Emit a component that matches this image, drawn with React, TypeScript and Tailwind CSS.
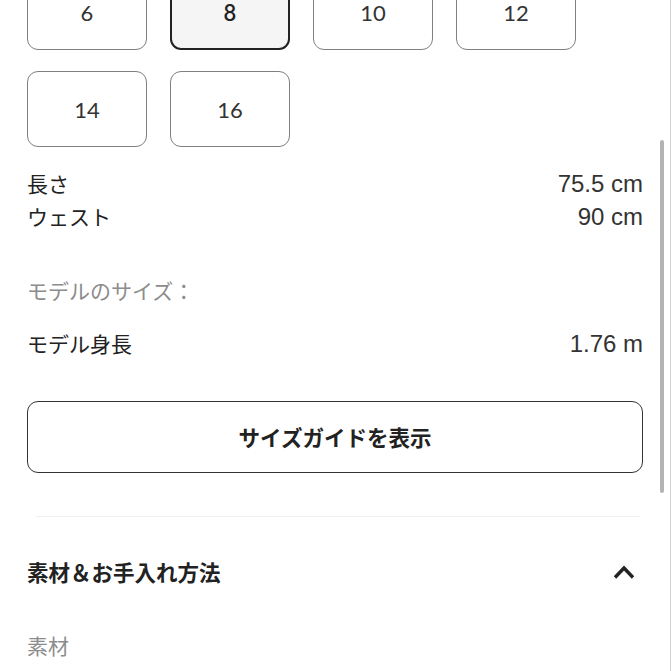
const sizes = ['6', '8', '10', '12', '14', '16']

const jp = { fontFamily: '"Noto Sans CJK JP", "Noto Sans", sans-serif' }
const num = { fontFamily: '"Liberation Sans", Arial, sans-serif' }

export default function App() {
  return (
    <div className="relative w-[671px] h-[671px] overflow-hidden bg-white border-r border-[#d4d4d4] text-[#222]" style={jp}>
      <div className="pl-[27px] pr-[27px] mt-[-26px]">
        <div className="grid grid-cols-[120px_120px_120px_120px] gap-x-[23px] gap-y-[21px]">
          {sizes.map((s) => (
            <div
              key={s}
              className={
                s === '8'
                  ? 'h-[76px] rounded-[11px] border-[2.5px] border-[#222] bg-[#f5f5f5] flex items-center justify-center text-[22px] font-semibold'
                  : 'h-[76px] rounded-[11px] border border-[#808080] bg-white flex items-center justify-center text-[22px] text-[#333]'
              }
              style={{ fontFamily: 'Lato, "Noto Sans", sans-serif' }}
            >
              {s}
            </div>
          ))}
        </div>

        <div className="mt-[20px] text-[21px] leading-[33px]">
          <div className="flex justify-between items-center">
            <span>長さ</span>
            <span className="text-[24px] text-[#333]" style={num}>75.5 cm</span>
          </div>
          <div className="flex justify-between items-center">
            <span>ウェスト</span>
            <span className="text-[24px] text-[#333]" style={num}>90 cm</span>
          </div>
        </div>

        <div className="mt-[41px] text-[21px] leading-[33px] text-[#8c8c8c]">モデルのサイズ：</div>

        <div className="mt-[20px] flex justify-between items-center text-[21px] leading-[33px]">
          <span>モデル身長</span>
          <span className="text-[24px] text-[#333]" style={num}>1.76 m</span>
        </div>

        <button className="mt-[41px] w-full h-[72px] rounded-[11px] border-[1.5px] border-[#333] bg-white flex items-center justify-center text-[21.5px] font-bold text-[#222]">
          サイズガイドを表示
        </button>

        <div className="mt-[43px] h-px bg-[#efefef] ml-[9px] mr-[3px]" />

        <div className="mt-[38px] flex items-center justify-between">
          <span className="text-[21.5px] font-bold leading-[33px]">素材＆お手入れ方法</span>
          <svg width="22" height="14" viewBox="0 0 22 14" className="mr-[8px]">
            <polyline points="2,12.5 11,3 20,12.5" fill="none" stroke="#222" strokeWidth="3.4" />
          </svg>
        </div>

        <div className="mt-[41px] text-[21px] leading-[33px] text-[#8c8c8c]">素材</div>
      </div>

      <div className="absolute left-[660px] top-[140px] w-[4px] h-[353px] rounded-full bg-[#b3b3b3]" />
    </div>
  )
}
